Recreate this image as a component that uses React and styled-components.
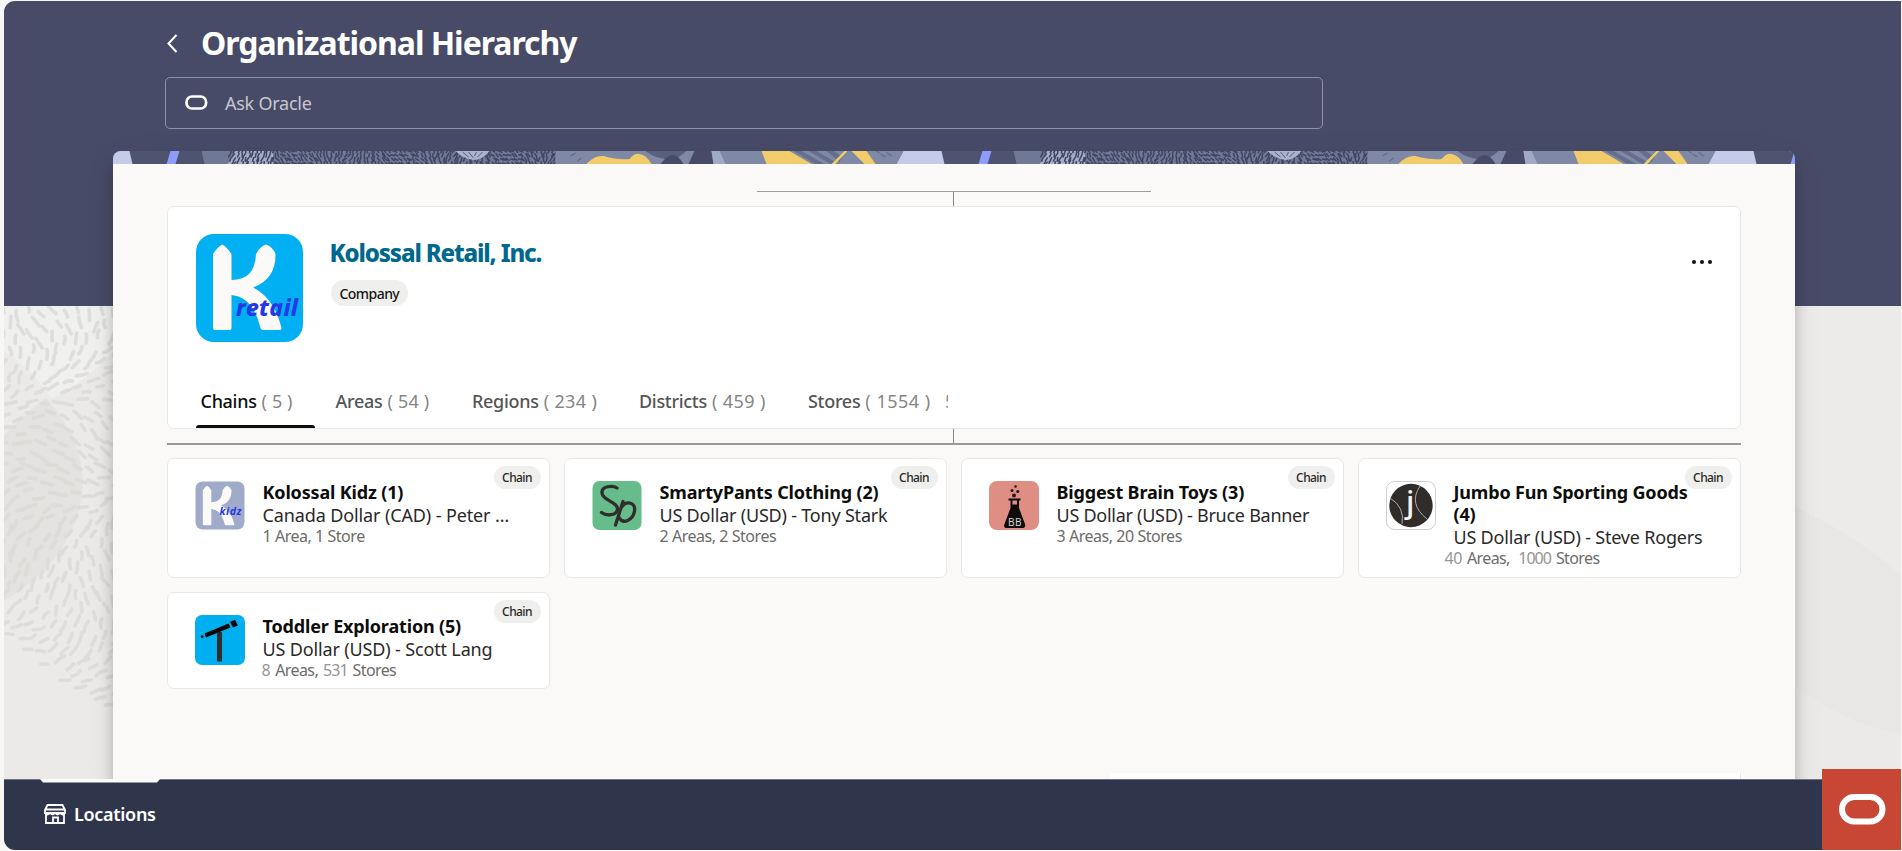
import React from 'react';
import styled, { createGlobalStyle } from 'styled-components';

const NAVY = '#474b67';
const FONT = "'Noto Sans', 'Open Sans', sans-serif";

const GlobalStyle = createGlobalStyle`
  *, *::before, *::after { box-sizing: border-box; }
  body { margin: 0; background: #f7f7f5; font-family: ${FONT}; overflow: hidden; }
`;

const Frame = styled.div`
  width: 1897px;
  height: 849px;
  margin: 1px 1px 1px 4px;
  display: grid;
  grid-template-rows: 778px 71px;
  border-radius: 11px 0 0 11px;
  overflow: hidden;
`;

const Body = styled.main`
  position: relative;
  overflow: hidden;
  background: linear-gradient(${NAVY} 305px, #ecebea 305px);
`;

const Scenery = styled.svg`
  position: absolute;
  top: 305px;
  left: 0;
  width: 1897px;
  height: 473px;
`;

const Header = styled.header`
  position: relative;
  height: 149.5px;
  padding: 26px 0 0 161px;
`;

const TitleRow = styled.div`
  display: flex;
  align-items: center;
  height: 32px;
  gap: 22px;
`;

const Title = styled.h1`
  margin: 0;
  color: #fff;
  font-size: 32px;
  font-weight: 700;
  line-height: 32px;
  letter-spacing: -1.04px;
`;

const SearchBox = styled.div`
  display: flex;
  align-items: center;
  gap: 17px;
  width: 1158px;
  height: 51.5px;
  margin-top: 18px;
  padding-left: 19px;
  border: 1px solid #8f92a3;
  border-radius: 5px;
  color: #c6c7d0;
  font-size: 18px;
  letter-spacing: -0.25px;
`;

const Panel = styled.section`
  position: relative;
  width: 1682.5px;
  height: 640px;
  margin-left: 108.5px;
  background: #faf9f7;
  border-radius: 8px 8px 0 0;
  box-shadow: 0 14px 14px rgba(0, 0, 0, 0.22), 0 8px 34px rgba(0, 0, 0, 0.06);
`;

const Banner = styled.svg`
  display: block;
  width: 1682.5px;
  height: 13px;
  border-radius: 8px 8px 0 0;
`;

const Content = styled.div`
  padding: 0.5px 54.5px 0 54px;
`;

const Connector = styled.div`
  display: flex;
  flex-direction: column;
  align-items: center;
`;

const Rule = styled.div`
  width: ${(p) => p.$width};
  height: 1.5px;
  background: #9b9b9b;
`;

const Stem = styled.div`
  width: 1px;
  height: ${(p) => p.$height}px;
  background: #858585;
`;

const TopConnector = styled(Connector)`
  height: 42px;
  padding-top: 26.5px;
`;

const BottomConnector = styled(Connector)`
  height: 29px;
`;

const CompanyCard = styled.article`
  display: flex;
  flex-direction: column;
  justify-content: space-between;
  height: 223px;
  padding: 27px 28px 0;
  background: #fff;
  border: 1px solid #e8e8e7;
  border-radius: 7px;
`;

const CompanyTop = styled.div`
  display: flex;
  align-items: flex-start;
  gap: 28px;
`;

const CompanyInfo = styled.div`
  flex: 1;
  padding-top: 4px;
`;

const CompanyName = styled.h2`
  margin: 0 0 12px -1px;
  color: #00688c;
  font-size: 24px;
  font-weight: 800;
  line-height: 30px;
  letter-spacing: -1.15px;
`;

const Pill = styled.span`
  display: inline-flex;
  align-items: center;
  height: 26px;
  padding: 0 9px;
  border-radius: 13px;
  background: #efefed;
  color: #161513;
  font-size: 14px;
  font-weight: 500;
  letter-spacing: -0.55px;
`;

const MoreButton = styled.button`
  display: flex;
  gap: 4px;
  margin: 26px 0 0 0;
  padding: 0;
  border: 0;
  background: none;
`;

const Dot = styled.i`
  width: 4px;
  height: 4px;
  border-radius: 50%;
  background: #111;
`;

const Tabs = styled.nav`
  display: flex;
  height: 39px;
  padding-left: 5px;
`;

const Tab = styled.div`
  position: relative;
  display: flex;
  gap: 5px;
  width: ${(p) => p.$width}px;
  color: ${(p) => (p.$active ? '#0d0d0c' : '#555')};
  font-size: 18px;
  font-weight: 500;
  line-height: 24px;
  letter-spacing: -0.3px;
  white-space: nowrap;
  &::after {
    content: '';
    display: ${(p) => (p.$active ? 'block' : 'none')};
    position: absolute;
    left: -5px;
    bottom: 0;
    width: 119px;
    height: 3px;
    border-radius: 3px 3px 0 0;
    background: #0d0d0c;
  }
`;

const Count = styled.span`
  color: #858585;
  font-weight: 400;
  letter-spacing: ${(p) => p.$spacing}px;
`;

const ClippedTab = styled.div`
  width: 2px;
  overflow: hidden;
  color: #858585;
  font-size: 18px;
  line-height: 24px;
  text-indent: -1px;
`;

const ChainGrid = styled.div`
  display: grid;
  grid-template-columns: repeat(4, 1fr);
  grid-template-rows: 119.5px 97px;
  gap: 14.5px 14px;
`;

const ChainCard = styled.article`
  position: relative;
  display: flex;
  align-items: flex-start;
  gap: 18px;
  padding: 22px 0 0 27px;
  background: #fff;
  border: 1px solid #e8e8e7;
  border-radius: 7px;
`;

const ChainIcon = styled.svg`
  width: 50px;
  height: 50px;
  flex: none;
`;

const ChainText = styled.div`
  width: 256px;
  margin-top: -0.5px;
`;

const ChainName = styled.h3`
  margin: 0;
  color: #0d0d0c;
  font-size: 18px;
  font-weight: 700;
  line-height: 22px;
  letter-spacing: -0.16px;
`;

const ChainOwner = styled.div`
  color: #2a2927;
  font-size: 18px;
  line-height: 24px;
  letter-spacing: ${(p) => p.$spacing || -0.2}px;
  white-space: nowrap;
`;

const ChainMeta = styled.div`
  display: flex;
  gap: 5px;
  margin-left: ${(p) => p.$outdent || 0}px;
  color: #6d6c6a;
  font-size: 16px;
  line-height: 18px;
  letter-spacing: -0.46px;
  white-space: pre;
`;

const Word = styled.span`
  letter-spacing: -0.6px;
`;

const SoftNumber = styled.span`
  color: #969593;
  letter-spacing: ${(p) => p.$spacing || -0.46}px;
  padding-left: ${(p) => p.$lead || 0}px;
`;

const Badge = styled.span`
  position: absolute;
  top: 6.5px;
  right: 8px;
  display: flex;
  align-items: center;
  justify-content: center;
  width: 47px;
  height: 23px;
  border-radius: 12px;
  background: #efefed;
  color: #2a2927;
  font-size: 12px;
  font-weight: 500;
  letter-spacing: -0.6px;
`;

const NextCardEdge = styled.div`
  position: absolute;
  right: 54.5px;
  bottom: 11.5px;
  width: 630px;
  height: 6px;
  background: #fff;
  border-right: 1px solid #e8e8e7;
`;

const Footer = styled.footer`
  position: relative;
  display: flex;
  align-items: center;
  padding: 0 0 3px 40px;
  background: #2f354a;
  border-top: 1px solid #6f7485;
`;

const FooterTab = styled.div`
  display: flex;
  align-items: center;
  gap: 8px;
  color: #fff;
  font-size: 18px;
  font-weight: 600;
  letter-spacing: -0.3px;
`;

const ActiveMark = styled.span`
  position: absolute;
  top: -1px;
  left: 36px;
  width: 120px;
  height: 3.5px;
  background: #fbfbfa;
  clip-path: polygon(0 0, 100% 0, calc(100% - 3px) 100%, 3px 100%);
`;

const OracleBadge = styled.div`
  position: fixed;
  left: 1822px;
  top: 769px;
  display: flex;
  align-items: center;
  justify-content: center;
  width: 79px;
  height: 81px;
  padding-bottom: 2px;
  background: #c74634;
`;

const noise = (n) => {
  const v = Math.sin(n * 127.1 + 311.7) * 43758.5453;
  return v - Math.floor(v);
};

const buildDashes = () => {
  const out = [];
  let n = 0;
  for (let row = 0; row < 32; row += 1) {
    for (let col = 0; col < 10; col += 1) {
      n += 1;
      const x = col * 12 + (row % 2) * 6 + (noise(n) - 0.5) * 4;
      const y = row * 13 + 4 + (noise(n + 900) - 0.5) * 5 + (col % 2) * 5;
      if (y > 328 + x * 0.76) continue;
      const swirl = Math.cos(y / 42) * 1.0 + Math.sin(x / 32 + y / 70) * 0.5;
      const a = Math.PI / 2 - swirl + 0.9 + (noise(n + 400) - 0.5) * 0.7;
      const len = 3.4 + noise(n + 70) * 2.4;
      const dx = Math.cos(a) * len;
      const dy = Math.sin(a) * len;
      const bend = (noise(n + 33) - 0.5) * 4;
      out.push(
        `M${(x - dx).toFixed(1)} ${(y - dy).toFixed(1)}Q${(x + bend).toFixed(1)} ${(y + bend / 2).toFixed(1)} ${(x + dx).toFixed(1)} ${(y + dy).toFixed(1)}`
      );
    }
  }
  return out.join('');
};

const buildHatch = () => {
  const out = [];
  let n = 0;
  for (let x = 229; x < 555; x += 3.6) {
    for (let y = 0; y < 14; y += 4.2) {
      n += 1;
      const a = x < 275 ? 1.6 + noise(n) * 0.6 : Math.sin(x / 17) * 0.8 + 0.9 + noise(n) * 0.8;
      const px = x + noise(n + 50) * 3;
      const dx = Math.cos(a) * 2.4;
      const dy = Math.sin(a) * 2.4;
      out.push(`M${(px - dx).toFixed(1)} ${(y - dy).toFixed(1)}L${(px + dx).toFixed(1)} ${(y + dy).toFixed(1)}`);
    }
  }
  return out.join('');
};

const DASHES = buildDashes();
const HATCH = buildHatch();

function BackgroundArt() {
  return (
    <Scenery viewBox="0 0 1897 473">
      <rect width="109" height="473" fill="#ebeae9" />
      <path d="M0 0H109V45Q78 80 47 92Q30 65 0 45Z" fill="#f0f0ee" />
      <path d="M0 130Q20 108 42 92Q76 128 79 175Q76 250 0 295Z" fill="#e4e3e1" />
      <path d={DASHES} fill="none" stroke="#d9d9d7" strokeOpacity="0.8" strokeWidth="3.6" strokeLinecap="round" />
      <path d="M1791 201Q1850 228 1897 269V428Q1840 417 1791 381Z" fill="#e8e7e5" />
      <path d="M1791 381Q1840 417 1897 428V473H1791Z" fill="#ebeae9" />
    </Scenery>
  );
}

function BannerArt() {
  return (
    <Banner viewBox="112.5 0 1682.5 13" preserveAspectRatio="none">
      <defs>
        <g id="motif">
          <path d="M129 0H201L204 13H132Z" fill="#4e5370" />
          <path d="M91 0H129L132 13H84Z" fill="#c3cbe8" />
          <path d="M170 0H179L175 13H166Z" fill="#8e9dfb" />
          <path d="M201 0H236L227 13H204Z" fill="#6f7894" />
          <path d="M235 0H273V13H227Z" fill="#a3adc8" />
          <path d="M273 0H556V13H273Z" fill="#6f7894" />
          <path d={HATCH} fill="none" stroke="#3f4562" strokeWidth="1.5" />
          <path d="M455 0H489Q482 9 473 9Q463 8 455 0Z" fill="#a9b3cd" />
          <path d="M462 1l6 5M468 1l5 6M482 1l-5 5M476 1l-2 4" stroke="#59607d" />
          <path d="M555 0H694L688 13H555Z" fill="#7f88a4" />
          <path d="M645 0H686Q678 7 672 9Q655 8 645 0Z" fill="#59607d" />
          <path d="M586 13Q594 4 603 5Q618 9 629 8Q634 2 639 3Q646 4 651 13Z" fill="#f2cc6b" />
          <path d="M660 13Q667 4 672 4Q678 4 683 13Z" fill={NAVY} />
          <path d="M711 0H903L896 13H713Z" fill="#7f88a4" />
          <path d="M711 0H719L725 13H713Z" fill="#a0a9c6" />
          <path d="M793 0H801L824 13H815ZM808 0H816L838 13H830ZM826 0H833L842 6L839 11Z" fill="#656e8b" />
          <path d="M880 3l5 3M886 1l5 4M876 0l3 2M570 5l5-3M577 10l4-3" stroke="#656e8b" strokeWidth="1.4" />
          <path d="M761 0H789L811 13H766Z" fill="#f2cc6b" />
          <path d="M844 0H847L835 13H831Z" fill="#f2cc6b" />
          <path d="M851 0H866L875 13H864Z" fill="#f2cc6b" />
        </g>
      </defs>
      <rect x="112" width="1684" height="13" fill={NAVY} />
      <use href="#motif" />
      <use href="#motif" x="812" />
      <use href="#motif" x="1624" />
    </Banner>
  );
}

function KMark({ fill = '#fbfaf8' }) {
  return (
    <path
      fill={fill}
      d="M17 20Q22 12 26.5 10.5Q30 12 35.5 20V46Q59 46 60 20Q64 12 70 10.5Q77 13 79.5 20Q80 45 57 53.5Q78 64 85.5 94Q85.5 96 84 96H67Q65 96 64.5 94Q57 63 35.5 61V94Q35.5 96 33.5 96H19Q17 96 17 94Z"
    />
  );
}

function CompanyLogo() {
  return (
    <svg width="107" height="108" viewBox="0 0 107 108">
      <rect width="107" height="108" rx="18" fill="#00b0f2" />
      <KMark />
      <text x="40" y="82" textLength="62" fontFamily="Noto Sans" fontSize="23" fontWeight="800" fontStyle="italic" fill="#2438e8">
        retail
      </text>
    </svg>
  );
}

const icons = {
  kidz: (
    <>
      <rect x="0.5" y="0.5" width="49" height="48" rx="7" fill="#a0abc9" />
      <g transform="scale(.46)">
        <KMark />
      </g>
      <text x="24.5" y="33.5" textLength="22" fontFamily="Noto Sans" fontSize="10.5" fontWeight="700" fontStyle="italic" fill="#2438e8">
        kidz
      </text>
    </>
  ),
  smarty: (
    <>
      <rect x="0.5" width="49" height="49" rx="7" fill="#66bc8b" />
      <g fill="none" stroke="#302d2a" strokeWidth="3.3" strokeLinecap="round" strokeLinejoin="round">
        <path d="M25 7C21 4 9 5 10 12C11 20 26 21 25.5 28C25 35 14 35 9.5 31.5" />
        <path d="M31 20.5L23.5 44M29 27C34 19 44 21 42.5 30C41 39 31 44 27 36.5" />
      </g>
    </>
  ),
  brain: (
    <>
      <rect x="0" width="50" height="49" rx="8" fill="#df8e84" />
      <path d="M19.5 17.5H31.5V19.5H30V27L36 43Q37 47 33 47H18Q14 47 15.5 43L21.5 27V19.5H19.5Z" fill="#0f0d0c" />
      <path d="M23.5 19.5H28V23.5H23.5Z" fill="#df8e84" />
      <g fill="#241a19">
        <circle cx="25" cy="14.5" r="2" />
        <circle cx="23" cy="9.5" r="1.5" />
        <circle cx="28.8" cy="10.5" r="1.6" />
        <circle cx="26.5" cy="5.5" r="1.3" />
      </g>
      <text x="19" y="45" textLength="13.5" fontFamily="Noto Sans" fontSize="10" fill="#d4d2d0">
        BB
      </text>
    </>
  ),
  jumbo: (
    <>
      <rect x="0.5" y="0.5" width="49" height="48" rx="8" fill="#fff" stroke="#cfcfcf" />
      <circle cx="25" cy="24.5" r="21.7" fill="#2f2c2a" />
      <g fill="none" stroke="#aaa" strokeWidth="1">
        <path d="M4 17Q19 26 16 43" />
        <path d="M34 5Q22 23 41 38" />
      </g>
      <text x="20" y="32" fontFamily="Noto Sans" fontSize="31" fontWeight="500" fill="#f4f4f4">
        j
      </text>
    </>
  ),
  toddler: (
    <>
      <rect width="50" height="50" rx="7" fill="#00aff0" />
      <path d="M22 17H27V46.5H22Z" fill="#302e2d" />
      <path d="M9.5 18.5L33.5 8.5L35.5 12.5L11 22.5Z" fill="#070707" />
      <path d="M35 7L40 4.8L42.8 10.5L38 12.5Z" fill="#070707" />
      <circle cx="7.2" cy="21.7" r="1.4" fill="#070707" />
    </>
  ),
};

const chains = [
  { icon: 'kidz', name: 'Kolossal Kidz (1)', owner: 'Canada Dollar (CAD) - Peter …', spacing: -0.12, meta: '1 Area, 1 Store' },
  { icon: 'smarty', name: 'SmartyPants Clothing (2)', owner: 'US Dollar (USD) - Tony Stark', meta: '2 Areas, 2 Stores' },
  { icon: 'brain', name: 'Biggest Brain Toys (3)', owner: 'US Dollar (USD) - Bruce Banner', spacing: -0.27, meta: '3 Areas, 20 Stores' },
  { icon: 'jumbo', name: 'Jumbo Fun Sporting Goods (4)', owner: 'US Dollar (USD) - Steve Rogers', counts: ['40', '1000'], outdent: -9, lead: 3.5 },
  { icon: 'toddler', name: 'Toddler Exploration (5)', owner: 'US Dollar (USD) - Scott Lang', spacing: -0.15, counts: ['8', '531'], outdent: -1, lead: -1 },
];

const tabs = [
  { label: 'Chains', count: '( 5 )', width: 135, spacing: 0.1, active: true },
  { label: 'Areas', count: '( 54 )', width: 136.5, spacing: 0.2 },
  { label: 'Regions', count: '( 234 )', width: 167, spacing: 0.35 },
  { label: 'Districts', count: '( 459 )', width: 169, spacing: 0.4 },
  { label: 'Stores', count: '( 1554 )', width: 138, spacing: 0.5 },
];

function Chain({ icon, name, owner, spacing, meta, counts, outdent, lead }) {
  return (
    <ChainCard>
      <ChainIcon viewBox="0 0 50 50">{icons[icon]}</ChainIcon>
      <ChainText>
        <ChainName>{name}</ChainName>
        <ChainOwner $spacing={spacing}>{owner}</ChainOwner>
        {counts ? (
          <ChainMeta $outdent={outdent}>
            <SoftNumber>{counts[0]}</SoftNumber>
            <Word>Areas,</Word>
            <SoftNumber $lead={lead} $spacing={-1}>{counts[1]}</SoftNumber>
            <Word>Stores</Word>
          </ChainMeta>
        ) : (
          <ChainMeta>{meta}</ChainMeta>
        )}
      </ChainText>
      <Badge>Chain</Badge>
    </ChainCard>
  );
}

export default function App() {
  return (
    <>
      <GlobalStyle />
      <Frame>
        <Body>
          <BackgroundArt />
          <Header>
            <TitleRow>
              <svg width="14" height="24" viewBox="0 0 14 24" fill="none" stroke="#fff" strokeWidth="2">
                <path d="M11.5 4L3.5 12.5L11.5 21" />
              </svg>
              <Title>Organizational Hierarchy</Title>
            </TitleRow>
            <SearchBox>
              <svg width="23" height="16" viewBox="0 0 23 16" fill="none" stroke="#fff" strokeWidth="2.7">
                <rect x="1.5" y="1.5" width="19.6" height="12" rx="5.5" />
              </svg>
              Ask Oracle
            </SearchBox>
          </Header>
          <Panel>
            <BannerArt />
            <Content>
              <TopConnector>
                <Rule $width="394px" />
                <Stem $height={14} />
              </TopConnector>
              <CompanyCard>
                <CompanyTop>
                  <CompanyLogo />
                  <CompanyInfo>
                    <CompanyName>Kolossal Retail, Inc.</CompanyName>
                    <Pill>Company</Pill>
                  </CompanyInfo>
                  <MoreButton aria-label="More actions">
                    <Dot />
                    <Dot />
                    <Dot />
                  </MoreButton>
                </CompanyTop>
                <Tabs>
                  {tabs.map((t) => (
                    <Tab key={t.label} $width={t.width} $active={t.active}>
                      {t.label}
                      <Count $spacing={t.spacing}>{t.count}</Count>
                    </Tab>
                  ))}
                  <ClippedTab>5</ClippedTab>
                </Tabs>
              </CompanyCard>
              <BottomConnector>
                <Stem $height={14} />
                <Rule $width="100%" />
              </BottomConnector>
              <ChainGrid>
                {chains.map((c) => (
                  <Chain key={c.name} {...c} />
                ))}
              </ChainGrid>
            </Content>
            <NextCardEdge />
          </Panel>
        </Body>
        <Footer>
          <ActiveMark />
          <FooterTab>
            <svg width="22" height="20" viewBox="0 0 22 20" fill="none" stroke="#fff" strokeWidth="1.8">
              <path d="M3.5 1H18.5L21 6V9H1V6ZM1.5 5.5H20.5M2 9V19H20V9M9 19V13.5H14V19" />
              <path d="M1 9Q3.5 12 6 9Q8.5 12 11 9Q13.5 12 16 9Q18.5 12 21 9" />
            </svg>
            Locations
          </FooterTab>
          <OracleBadge>
            <svg width="48" height="32" viewBox="0 0 48 32" fill="none" stroke="#fff" strokeWidth="6">
              <rect x="4" y="4" width="40.5" height="24.5" rx="12.2" />
            </svg>
          </OracleBadge>
        </Footer>
      </Frame>
    </>
  );
}
